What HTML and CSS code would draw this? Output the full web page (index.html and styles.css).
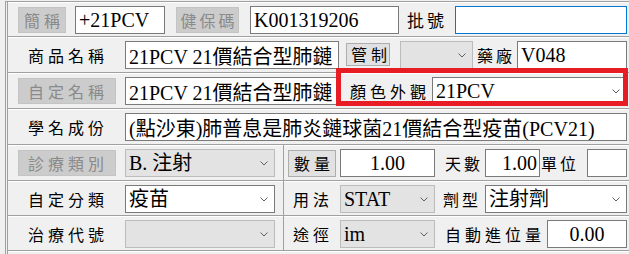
FILE: index.html
```html
<!DOCTYPE html>
<html lang="zh-Hant">
<head>
  <meta charset="UTF-8" />
  <title>藥品資料</title>
  <link rel="stylesheet" href="styles.css">
</head>
<body>
<div class="form">

  <div class="row first">
    <span class="btn off abbr-btn">簡稱</span>
    <input class="field abbr-in" value="+21PCV" />
    <span class="btn off nhi-btn">健保碼</span>
    <input class="field nhi-in" value="K001319206" />
    <span class="lbl lot-lbl">批號</span>
    <input class="field lot-in" value="" />
  </div>

  <div class="row">
    <span class="lbl wide">商品名稱</span>
    <input class="field name-in" value="21PCV 21價結合型肺鏈" />
    <span class="btn on ctrl-btn">管制</span>
    <div class="combo off ctrl-combo"><span></span><svg class="chev" width="8" height="5" viewBox="0 0 8 5"><path d="M0.5 0.5 L4 4 L7.5 0.5" /></svg></div>
    <span class="lbl maker-lbl">藥廠</span>
    <input class="field maker-in" value="V048" />
  </div>

  <div class="row">
    <span class="btn off wide-btn">自定名稱</span>
    <input class="field name-in" value="21PCV 21價結合型肺鏈" />
    <span class="lbl look-lbl">顏色外觀</span>
    <div class="combo look-combo"><span>21PCV</span><svg class="chev" width="8" height="5" viewBox="0 0 8 5"><path d="M0.5 0.5 L4 4 L7.5 0.5" /></svg></div>
    <div class="mark"></div>
  </div>

  <div class="row">
    <span class="lbl wide">學名成份</span>
    <input class="field sci-in" value="(點沙東)肺普息是肺炎鏈球菌21價結合型疫苗(PCV21)" />
  </div>

  <div class="row split">
    <div class="left">
      <span class="btn off wide-btn">診療類別</span>
      <div class="combo off cat"><span>B. 注射</span><svg class="chev" width="8" height="5" viewBox="0 0 8 5"><path d="M0.5 0.5 L4 4 L7.5 0.5" /></svg></div>
    </div>
    <div class="right">
      <span class="btn on qty-btn">數量</span>
      <input class="field qty-in" value="1.00" />
      <span class="lbl days-lbl">天數</span>
      <input class="field days-in" value="1.00" />
      <span class="lbl unit-lbl">單位</span>
      <input class="field unit-in" value="" />
    </div>
  </div>

  <div class="row split short">
    <div class="left">
      <span class="lbl wide">自定分類</span>
      <div class="combo cat"><span>疫苗</span><svg class="chev" width="8" height="5" viewBox="0 0 8 5"><path d="M0.5 0.5 L4 4 L7.5 0.5" /></svg></div>
    </div>
    <div class="right">
      <span class="lbl small">用法</span>
      <div class="combo off mid"><span>STAT</span><svg class="chev" width="8" height="5" viewBox="0 0 8 5"><path d="M0.5 0.5 L4 4 L7.5 0.5" /></svg></div>
      <span class="lbl form-lbl">劑型</span>
      <div class="combo form-combo"><span>注射劑</span><svg class="chev" width="8" height="5" viewBox="0 0 8 5"><path d="M0.5 0.5 L4 4 L7.5 0.5" /></svg></div>
    </div>
  </div>

  <div class="row split short">
    <div class="left">
      <span class="lbl wide">治療代號</span>
      <div class="combo off cat"><span></span><svg class="chev" width="8" height="5" viewBox="0 0 8 5"><path d="M0.5 0.5 L4 4 L7.5 0.5" /></svg></div>
    </div>
    <div class="right">
      <span class="lbl small">途徑</span>
      <div class="combo off mid"><span>im</span><svg class="chev" width="8" height="5" viewBox="0 0 8 5"><path d="M0.5 0.5 L4 4 L7.5 0.5" /></svg></div>
      <span class="lbl auto-lbl">自動進位量</span>
      <input class="field auto-in" value="0.00" />
    </div>
  </div>

  <div class="row tail"></div>
</div>
</body>
</html>
```

FILE: styles.css
```css
:root {
  --fundo: #f0f0f0;
  --linha: #a0a0a0;
  --borda: #7a7a7a;
  --off-bg: #cccccc;
  --off-texto: #8a8a8a;
  --combo-off: #e3e3e3;
  --vermelho: #e81c24;
  --azul: #0078d7;
}

* { box-sizing: border-box; margin: 0; padding: 0; }

body {
  background: var(--fundo);
  font-family: "Noto Sans CJK TC", sans-serif;
  font-size: 16px;
  color: #000;
  overflow: hidden;
}

.form {
  margin: 1px 0 0 5px;
  border-top: 1px solid var(--linha);
  border-left: 3px double var(--linha);
}

.row {
  position: relative;
  display: flex;
  align-items: flex-start;
  height: 36px;
  padding: 4px 0 0 10px;
  border-bottom: 1px solid var(--linha);
  box-shadow: inset 0 1px #fff;
}

.row.first,
.row.short { height: 35px; }

.row.split { padding: 0; }

.row.tail {
  height: 3px;
  padding: 0;
  border-bottom: none;
}

.left,
.right {
  display: flex;
  align-items: flex-start;
  height: 100%;
  padding-top: 4px;
}

.left {
  width: 276px;
  padding-left: 10px;
  border-right: 1px solid var(--linha);
}

.right { padding-left: 4px; }

/* campos */
.field,
.combo {
  flex: none;
  height: 28px;
  background: #fff;
  border: 1px solid var(--borda);
  font: 20px "Liberation Serif", "Noto Sans CJK TC", serif;
  color: #000;
  padding: 0 3px;
  outline: none;
}

.combo {
  display: flex;
  align-items: center;
  line-height: 26px;
  padding-right: 6px;
  white-space: nowrap;
  overflow: hidden;
}

.combo.off {
  background: var(--combo-off);
  border-color: #bcbcbc;
}

.chev {
  flex: none;
  margin-left: auto;
}

.chev path {
  fill: none;
  stroke: #606060;
  stroke-width: 1;
}

.lbl {
  flex: none;
  height: 28px;
  line-height: 28px;
  letter-spacing: 4px;
  white-space: nowrap;
}

.lbl.wide {
  width: 98px;
  text-align: center;
  padding-left: 2px;
}

.lbl.small {
  width: 48px;
  text-align: center;
  padding-left: 2px;
}

.btn {
  flex: none;
  height: 26px;
  margin-top: 1px;
  line-height: 24px;
  border: 1px solid;
  text-align: center;
  letter-spacing: 4px;
  padding-left: 4px;
  white-space: nowrap;
}

.btn.off {
  background: var(--off-bg);
  border-color: #c4c4c4;
  color: var(--off-texto);
}

.btn.on {
  background: #e1e1e1;
  border-color: #adadad;
}

.wide-btn { width: 98px; padding-left: 2px; }

/* linha 1 */
.abbr-btn { width: 48px; }
.abbr-in { margin-left: 9px; width: 90px; }
.nhi-btn { margin-left: 11px; width: 63px; letter-spacing: 3px; padding-left: 3px; }
.nhi-in { margin-left: 11px; width: 149px; }
.lot-lbl { margin-left: 8px; width: 40px; font-size: 17px; letter-spacing: 3px; }
.lot-in { margin-left: 8px; width: 172px; border-color: var(--azul); }

/* linha 2 e 3 */
.name-in { margin-left: 9px; width: 214px; }
.ctrl-btn { margin-left: 7px; margin-top: 2px; width: 44px; height: 23px; line-height: 21px; }
.ctrl-combo { margin-left: 10px; width: 73px; }
.maker-lbl { margin-left: 4px; width: 36px; letter-spacing: 3px; }
.maker-in { margin-left: 4px; width: 110px; }
.look-lbl { margin-left: 11px; width: 78px; }
.look-combo { margin-left: 4px; width: 195px; }

.mark {
  position: absolute;
  left: 328px;
  top: -5px;
  width: 292px;
  height: 38px;
  border: 5px solid var(--vermelho);
}

/* linha 4 */
.sci-in { margin-left: 9px; width: 502px; }

/* linhas 5 a 7 */
.cat { margin-left: 9px; width: 150px; }
.mid { margin-left: 4px; width: 95px; }

.qty-btn { width: 48px; height: 27px; line-height: 25px; }
.qty-in { margin-left: 4px; width: 95px; text-align: center; }
.days-lbl { margin-left: 10px; width: 35px; letter-spacing: 3px; }
.days-in { margin-left: 5px; width: 55px; text-align: right; padding-right: 2px; }
.unit-lbl { margin-left: 1px; width: 37px; letter-spacing: 3px; }
.unit-in { margin-left: 9px; width: 40px; }

.form-lbl { margin-left: 8px; width: 37px; letter-spacing: 3px; }
.form-combo { margin-left: 5px; width: 142px; }

.auto-lbl { margin-left: 10px; width: 95px; }
.auto-in { margin-left: 7px; width: 80px; text-align: center; }
```
